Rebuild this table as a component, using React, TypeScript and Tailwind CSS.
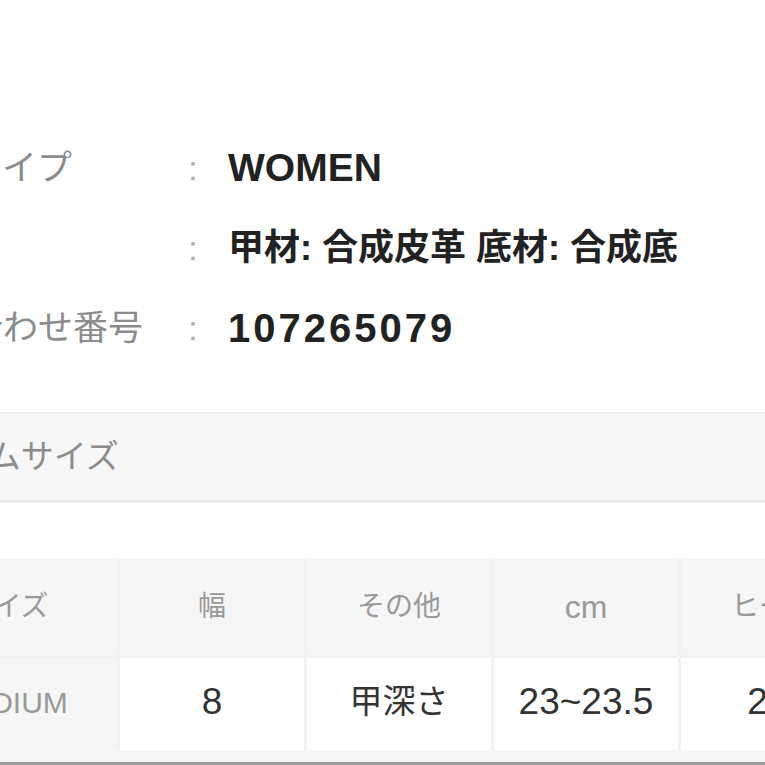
import React from 'react';

const font = "font-['Liberation_Sans','Noto_Sans_CJK_JP',sans-serif]";

const specs = [
  { label: 'サイズタイプ', value: 'WOMEN', cls: 'text-[39px]' },
  { label: '素材', value: '甲材: 合成皮革 底材: 合成底', cls: 'text-[36px]' },
  { label: 'お問い合わせ番号', value: '107265079', cls: 'text-[40px] tracking-[3px]' },
];

const head = [
  { t: 'サイズ', cls: 'text-[28px]' },
  { t: '幅', cls: 'text-[28px]' },
  { t: 'その他', cls: 'text-[28px]' },
  { t: 'cm', cls: 'text-[32px]' },
  { t: 'ヒール', cls: 'text-[28px]' },
];
const body = [
  { t: 'MEDIUM', cls: 'bg-[#f6f6f6] text-[30px] text-[#999999]' },
  { t: '8', cls: 'bg-white text-[37px] text-[#333333]' },
  { t: '甲深さ', cls: 'bg-white text-[33px] text-[#333333]' },
  { t: '23~23.5', cls: 'bg-white text-[37px] text-[#333333]' },
  { t: '2.5', cls: 'bg-white text-[37px] text-[#333333]' },
];

const App = () => {
  return (
    <div className={`w-[765px] h-[765px] overflow-hidden bg-white ${font}`}>
      <div className="pt-[128px]">
        {specs.map((s) => (
          <div key={s.label} className="flex items-center h-[80px] whitespace-nowrap">
            <div className="ml-[-137px] w-[320px] shrink-0 text-[35px] text-[#8c8c8c]">{s.label}</div>
            <div className="w-[20px] shrink-0 text-center text-[34px] text-[#b0b0b0]">:</div>
            <div className={`ml-[25px] font-bold text-[#222222] ${s.cls}`}>{s.value}</div>
          </div>
        ))}
      </div>

      <div className="mt-[44px] h-[91px] flex items-center bg-[#f7f7f7] border-t-2 border-b-[3px] border-[#ededed] whitespace-nowrap">
        <span className="ml-[-108px] text-[33px] text-[#8c8c8c]">アイテムサイズ</span>
      </div>

      <div className="mt-[55px] bg-[#f7f7f7] border-b-[3px] border-[#9a9a9a] pb-[12px]">
        <div className="ml-[-103px] grid grid-cols-[220px_184px_184px_184px_184px] gap-[3px] bg-[#f2f2f2] w-max">
          {head.map((h) => (
            <div key={h.t} className={`h-[97px] flex items-center justify-center bg-[#f6f6f6] text-[#999999] whitespace-nowrap ${h.cls}`}>
              {h.t}
            </div>
          ))}
          {body.map((b) => (
            <div key={b.t} className={`h-[92px] pb-[4px] flex items-center justify-center whitespace-nowrap ${b.cls}`}>
              {b.t}
            </div>
          ))}
        </div>
      </div>
    </div>
  );
};

export default App;
